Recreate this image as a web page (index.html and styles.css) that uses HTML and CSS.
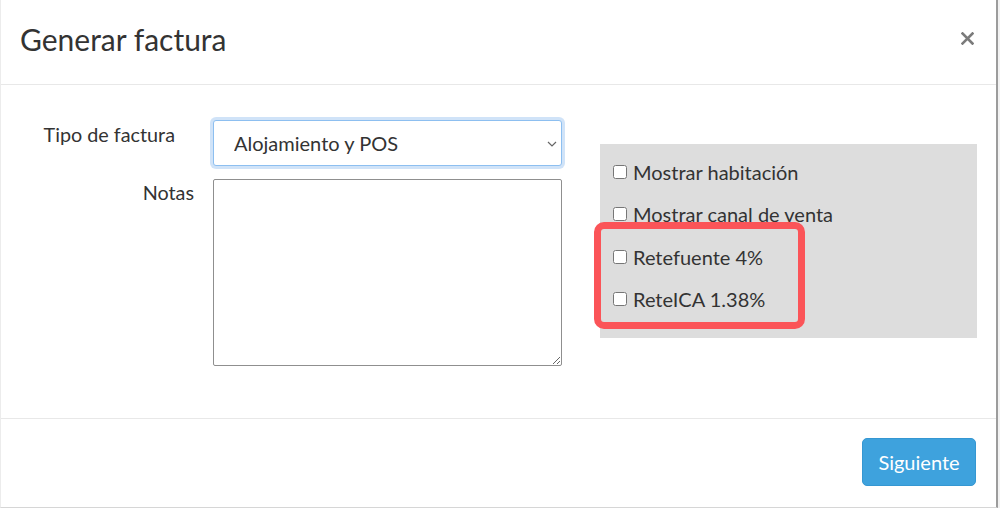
FILE: index.html
```html
<!DOCTYPE html>
<html>
<head>
  <meta charset="utf-8">
  <title>Generar factura</title>
  <link rel="stylesheet" href="styles.css">
</head>
<body>
  <div class="modal" role="dialog" aria-label="Generar factura">
    <div class="modal-header">
      <h4 class="modal-title">Generar factura</h4>
      <button class="close" type="button" aria-label="Cerrar">
        <svg width="13" height="13" viewBox="0 0 13 13"><path d="M1.5 1.5 L11.5 11.5 M11.5 1.5 L1.5 11.5" stroke="#7b7b7b" stroke-width="2.6" stroke-linecap="square"/></svg>
      </button>
    </div>
    <div class="modal-body">
      <div class="form-col">
        <div class="form-row">
          <label class="lbl lbl-tipo" for="tipo">Tipo de factura</label>
          <div class="select-wrap">
            <select id="tipo" class="field select">
              <option>Alojamiento y POS</option>
              <option>Alojamiento</option>
              <option>POS</option>
            </select>
            <svg class="chev" width="10" height="6" viewBox="0 0 10 6"><path d="M1 1 L5 5 L9 1" fill="none" stroke="#666" stroke-width="1.2"/></svg>
          </div>
        </div>
        <div class="form-row">
          <label class="lbl lbl-notas" for="notas">Notas</label>
          <textarea id="notas" class="field notes"></textarea>
        </div>
      </div>
      <div class="options">
        <label class="check"><input type="checkbox">Mostrar habitación</label>
        <label class="check"><input type="checkbox">Mostrar canal de venta</label>
        <label class="check"><input type="checkbox">Retefuente 4%</label>
        <label class="check"><input type="checkbox">ReteICA 1.38%</label>
        <div class="highlight"></div>
      </div>
    </div>
    <div class="modal-footer">
      <button class="btn-primary" type="button">Siguiente</button>
    </div>
  </div>
</body>
</html>
```

FILE: styles.css
```css
html, body {
    margin: 0;
    padding: 0;
    background: #f2f2f2;
    font-family: Lato, "Open Sans", sans-serif;
    color: #333;
}

.modal {
    width: 995px;
    height: 507px;
    background: #fff;
    border-left: 1px solid #ececec;
    border-right: 2px solid #9c9c9c;
    border-bottom: 1px solid #d6d6d6;
    box-sizing: content-box;
    overflow: hidden;
}

.modal-header {
    height: 85px;
    border-bottom: 1px solid #e8e8e8;
    display: flex;
    align-items: center;
    justify-content: space-between;
    padding: 0 22px 0 19px;
    box-sizing: border-box;
}
.modal-title {
    margin: 0;
    font-size: 30px;
    font-weight: 400;
    color: #333;
    padding-bottom: 6px;
}
.close {
    border: 0;
    background: none;
    padding: 0;
    margin-top: -8px;
    cursor: pointer;
    display: flex;
}

.modal-body {
    height: 334px;
    border-bottom: 1px solid #e8e8e8;
    display: flex;
    padding-top: 35px;
    box-sizing: border-box;
}

.form-col {
    width: 561px;
    display: flex;
    flex-direction: column;
    gap: 13px;
}
.form-row {
    display: flex;
}
.lbl {
    width: 193px;
    margin-right: 19px;
    text-align: right;
    font-size: 19.8px;
    box-sizing: border-box;
}
.lbl-tipo {
    padding-right: 19px;
    padding-top: 2px;
}
.lbl-notas {
    padding-top: 1px;
}

.select-wrap {
    position: relative;
}
.field {
    width: 349px;
    box-sizing: border-box;
    font-family: Lato, "Open Sans", sans-serif;
    color: #333;
    background: #fff;
}
.select {
    appearance: none;
    -webkit-appearance: none;
    height: 46px;
    font-size: 20px;
    padding: 0 30px 0 20px;
    border: 1px solid #8dbff0;
    border-radius: 3px;
    box-shadow: 0 0 0 3px rgba(120, 175, 235, 0.35);
    outline: none;
}
.chev {
    position: absolute;
    right: 5px;
    top: 21px;
    pointer-events: none;
}
.notes {
    height: 187px;
    border: 1px solid #8f8f8f;
    border-radius: 2px;
    font-size: 16px;
    padding: 4px;
    resize: both;
}

.options {
    position: relative;
    width: 377px;
    height: 194px;
    margin: 24px 0 0 38px;
    background: #dddddd;
    padding: 7px 0 0 13px;
    box-sizing: border-box;
}
.check {
    display: flex;
    align-items: center;
    height: 42.3px;
    font-size: 20px;
    color: #333;
}
.check input {
    width: 14px;
    height: 14px;
    margin: 0 6px 0 0;
}

.highlight {
    position: absolute;
    left: -6px;
    top: 78px;
    width: 211px;
    height: 107px;
    border: 7px solid #fb5458;
    border-radius: 10px;
    box-sizing: border-box;
    pointer-events: none;
}

.modal-footer {
    display: flex;
    justify-content: flex-end;
    padding: 19px 20px 0 0;
}
.btn-primary {
    width: 114px;
    height: 48px;
    border: 1px solid #3597d2;
    border-radius: 5px;
    background: #3ea2dd;
    color: #fff;
    font-family: Lato, "Open Sans", sans-serif;
    font-size: 20px;
    cursor: pointer;
}
```
